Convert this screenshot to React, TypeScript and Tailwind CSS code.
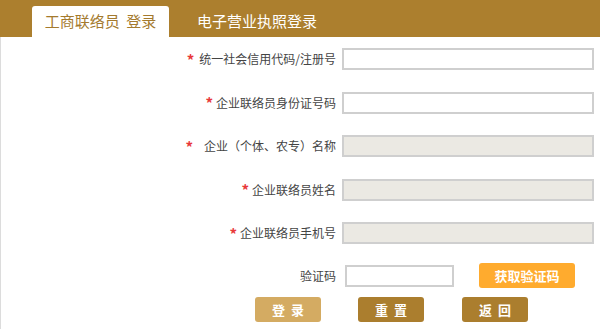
import React from "react";

const font = { fontFamily: '"Noto Sans CJK SC", "Noto Sans", sans-serif' };

type Row = { label: string; gap: string; disabled?: boolean };

const rows: Row[] = [
  { label: "统一社会信用代码/注册号", gap: "mr-[5px]" },
  { label: "企业联络员身份证号码", gap: "mr-[3px]" },
  { label: "企业（个体、农专）名称", gap: "mr-[11px]", disabled: true },
  { label: "企业联络员姓名", gap: "mr-[3px]", disabled: true },
  { label: "企业联络员手机号", gap: "mr-[3px]", disabled: true },
];

export default function App() {
  return (
    <div className="w-[600px] h-[329px] bg-white overflow-hidden" style={font}>
      {/* tab header */}
      <div className="h-[37px] bg-[#ac7f2e] flex items-end pl-[32px]">
        <div className="w-[137px] h-[31px] bg-white rounded-t-[3px] flex items-center justify-center text-[15px] text-[#a47a2e]">
          工商联络员&nbsp;&nbsp;登录
        </div>
        <div className="ml-[28px] h-[31px] flex items-center text-[15px] text-white">电子营业执照登录</div>
      </div>

      <div className="border-l border-[#dcdcdc] h-[292px] pt-[11px]">
        <div className="flex flex-col gap-[21.5px]">
          {rows.map((r) => (
            <div key={r.label} className="flex items-center h-[22px]">
              <div className="w-[335px] flex items-center justify-end text-[12px] text-[#444]">
                <span className={`text-[#e8393a] text-[15px] font-bold leading-none ${r.gap}`}>*</span>
                <span>{r.label}</span>
              </div>
              <input
                disabled={r.disabled}
                className={`ml-[6px] w-[252px] h-[22px] border-2 border-[#cfcfcf] outline-none ${
                  r.disabled ? "bg-[#ebe9e3]" : "bg-white"
                }`}
              />
            </div>
          ))}
        </div>

        <div className="flex items-center mt-[19px] h-[25px]">
          <div className="w-[335px] text-right text-[12px] text-[#444]">验证码</div>
          <input className="ml-[9px] w-[109px] h-[22px] border-2 border-[#cfcfcf] outline-none bg-white" />
          <button className="ml-[25px] w-[96px] h-[25px] rounded-[3px] bg-[#ffab2e] text-white text-[13px] font-bold">
            获取验证码
          </button>
        </div>

        <div className="flex mt-[9px] pl-[254px]">
          <button className="w-[66px] h-[25px] rounded-[3px] bg-[#d4ab62] text-white text-[13px] font-bold tracking-[6px] pl-[6px]">
            登录
          </button>
          <button className="ml-[37px] w-[66px] h-[25px] rounded-[3px] bg-[#ab7e2e] text-white text-[13px] font-bold tracking-[6px] pl-[6px]">
            重置
          </button>
          <button className="ml-[38px] w-[66px] h-[25px] rounded-[3px] bg-[#ab7e2e] text-white text-[13px] font-bold tracking-[6px] pl-[6px]">
            返回
          </button>
        </div>
      </div>
    </div>
  );
}
